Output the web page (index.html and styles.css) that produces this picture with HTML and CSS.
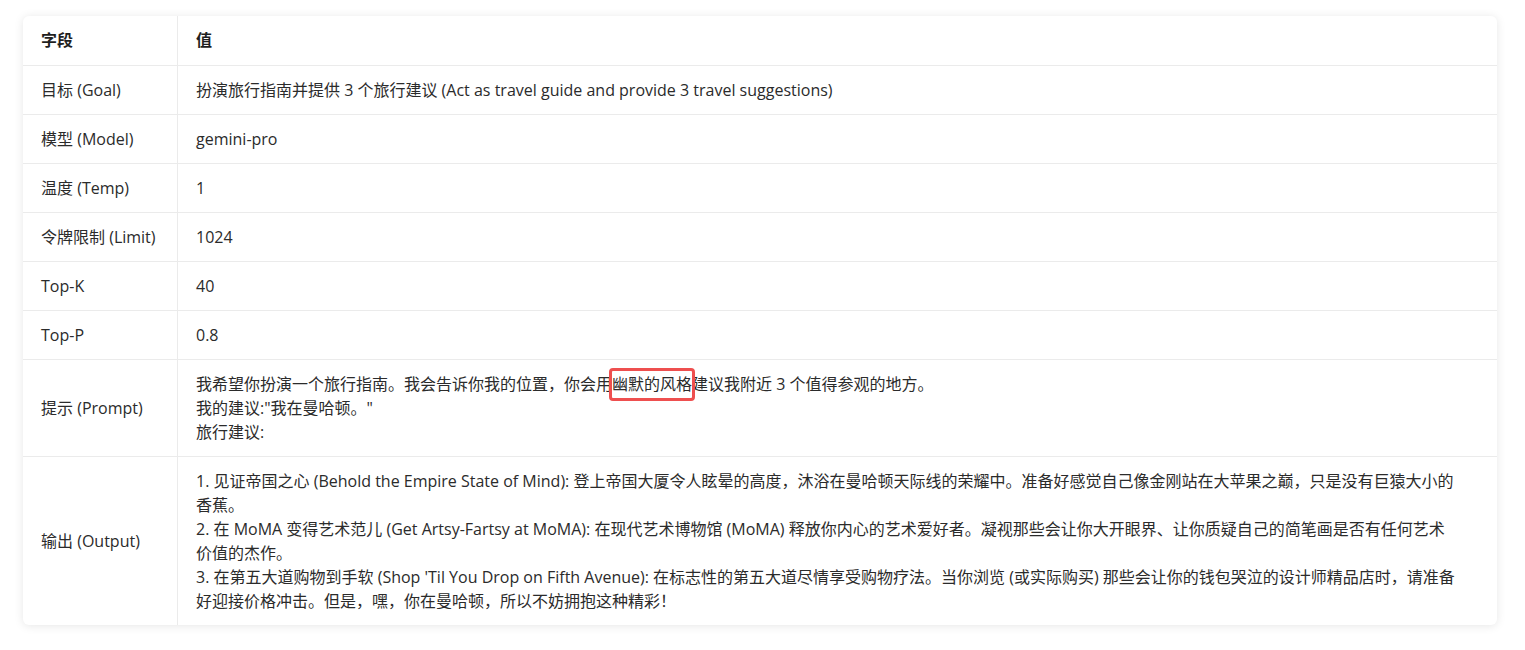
FILE: index.html
```html
<!DOCTYPE html>
<html lang="zh-CN">

<head>
  <meta charset="UTF-8" />
  <meta name="viewport" content="width=device-width, initial-scale=1.0" />
  <title>旅行指南提示</title>
  <link rel="stylesheet" href="styles.css">
</head>

<body>
  <div class="card">
    <table class="params">
      <thead>
        <tr>
          <th class="field">字段</th>
          <th>值</th>
        </tr>
      </thead>
      <tbody>
        <tr>
          <td class="field">目标 (Goal)</td>
          <td>扮演旅行指南并提供 3 个旅行建议 (Act as travel guide and provide 3 travel suggestions)</td>
        </tr>
        <tr>
          <td class="field">模型 (Model)</td>
          <td>gemini-pro</td>
        </tr>
        <tr>
          <td class="field">温度 (Temp)</td>
          <td>1</td>
        </tr>
        <tr>
          <td class="field">令牌限制 (Limit)</td>
          <td>1024</td>
        </tr>
        <tr>
          <td class="field">Top-K</td>
          <td>40</td>
        </tr>
        <tr>
          <td class="field">Top-P</td>
          <td>0.8</td>
        </tr>
        <tr>
          <td class="field">提示 (Prompt)</td>
          <td>我希望你扮演一个旅行指南。我会告诉你我的位置，你会用<span class="mark">幽默的风格</span>建议我附近 3 个值得参观的地方。<br>我的建议:"我在曼哈顿。"<br>旅行建议:</td>
        </tr>
        <tr>
          <td class="field">输出 (Output)</td>
          <td>1. 见证帝国之心 (Behold the Empire State of Mind): 登上帝国大厦令人眩晕的高度，沐浴在曼哈顿天际线的荣耀中。准备好感觉自己像金刚站在大苹果之巅，只是没有巨猿大小的香蕉。<br>2. 在 MoMA 变得艺术范儿 (Get Artsy-Fartsy at MoMA): 在现代艺术博物馆 (MoMA) 释放你内心的艺术爱好者。凝视那些会让你大开眼界、让你质疑自己的简笔画是否有任何艺术价值的杰作。<br>3. 在第五大道购物到手软 (Shop 'Til You Drop on Fifth Avenue): 在标志性的第五大道尽情享受购物疗法。当你浏览 (或实际购买) 那些会让你的钱包哭泣的设计师精品店时，请准备好迎接价格冲击。但是，嘿，你在曼哈顿，所以不妨拥抱这种精彩！</td>
        </tr>
      </tbody>
    </table>
  </div>
</body>

</html>
```

FILE: styles.css
```css
body {
  margin: 0;
  padding: 16px 28px 24px 23px;
  background-color: #fff;
  font-family: "Segoe UI", "Open Sans", "Noto Sans CJK SC", sans-serif;
  font-size: 16px;
  color: #2b2b2b;
}

.card {
  background-color: #fff;
  border-radius: 6px;
  box-shadow: 0 1px 10px rgba(0, 0, 0, 0.1);
  overflow: hidden;
}

.params {
  width: 100%;
  border-collapse: collapse;
}

.params th,
.params td {
  padding: 12px 40px 12px 18px;
  line-height: 24px;
  text-align: left;
  vertical-align: middle;
  border-top: 1px solid #ebebeb;
}

.params th {
  padding-bottom: 13px;
  font-weight: bold;
  color: #1f1f1f;
  border-top: none;
}

.params .field {
  width: 118px;
  padding-right: 18px;
  border-right: 1px solid #ebebeb;
}

.mark {
  position: relative;
}

.mark::after {
  content: "";
  position: absolute;
  left: -3px;
  right: -3px;
  top: -5px;
  bottom: -6px;
  border: 3px solid #ee4f4f;
  border-radius: 4px;
}
```
